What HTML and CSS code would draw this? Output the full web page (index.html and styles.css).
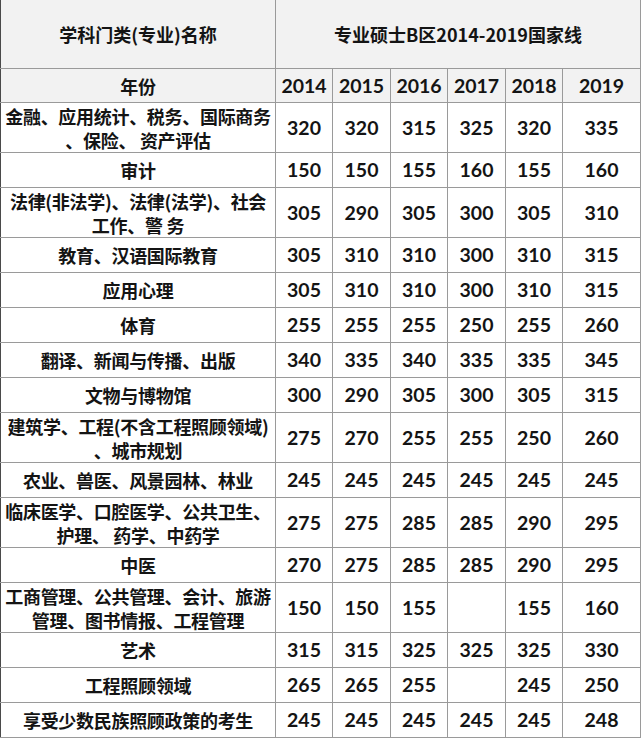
FILE: index.html
```html
<!DOCTYPE html>
<html lang="zh-CN">
<head>
<meta charset="utf-8">
<title>专业硕士B区2014-2019国家线</title>
<link rel="stylesheet" href="styles.css">
</head>
<body>
<table class="score-table">
  <colgroup>
    <col class="c-name">
    <col class="c-y1">
    <col class="c-y2">
    <col class="c-y3">
    <col class="c-y4">
    <col class="c-y5">
    <col class="c-y6">
  </colgroup>
  <thead>
    <tr class="r-title">
      <th class="name">学科门类(专业)名称</th>
      <th colspan="6" class="title">专业硕士B区2014-2019国家线</th>
    </tr>
    <tr class="r-years">
      <th class="name">年份</th>
      <th class="num">2014</th>
      <th class="num">2015</th>
      <th class="num">2016</th>
      <th class="num">2017</th>
      <th class="num">2018</th>
      <th class="num">2019</th>
    </tr>
  </thead>
  <tbody>
    <tr class="r2">
      <td class="name">金融、应用统计、税务、国际商务<br>、保险、 资产评估</td>
      <td class="num">320</td><td class="num">320</td><td class="num">315</td><td class="num">325</td><td class="num">320</td><td class="num">335</td>
    </tr>
    <tr class="r1">
      <td class="name">审计</td>
      <td class="num">150</td><td class="num">150</td><td class="num">155</td><td class="num">160</td><td class="num">155</td><td class="num">160</td>
    </tr>
    <tr class="r2">
      <td class="name">法律(非法学)、法律(法学)、社会<br>工作、警 务</td>
      <td class="num">305</td><td class="num">290</td><td class="num">305</td><td class="num">300</td><td class="num">305</td><td class="num">310</td>
    </tr>
    <tr class="r1">
      <td class="name">教育、汉语国际教育</td>
      <td class="num">305</td><td class="num">310</td><td class="num">310</td><td class="num">300</td><td class="num">310</td><td class="num">315</td>
    </tr>
    <tr class="r1">
      <td class="name">应用心理</td>
      <td class="num">305</td><td class="num">310</td><td class="num">310</td><td class="num">300</td><td class="num">310</td><td class="num">315</td>
    </tr>
    <tr class="r1">
      <td class="name">体育</td>
      <td class="num">255</td><td class="num">255</td><td class="num">255</td><td class="num">250</td><td class="num">255</td><td class="num">260</td>
    </tr>
    <tr class="r1">
      <td class="name">翻译、新闻与传播、出版</td>
      <td class="num">340</td><td class="num">335</td><td class="num">340</td><td class="num">335</td><td class="num">335</td><td class="num">345</td>
    </tr>
    <tr class="r1">
      <td class="name">文物与博物馆</td>
      <td class="num">300</td><td class="num">290</td><td class="num">305</td><td class="num">300</td><td class="num">305</td><td class="num">315</td>
    </tr>
    <tr class="r2">
      <td class="name">建筑学、工程(不含工程照顾领域)<br>、城市规划</td>
      <td class="num">275</td><td class="num">270</td><td class="num">255</td><td class="num">255</td><td class="num">250</td><td class="num">260</td>
    </tr>
    <tr class="r1">
      <td class="name">农业、兽医、风景园林、林业</td>
      <td class="num">245</td><td class="num">245</td><td class="num">245</td><td class="num">245</td><td class="num">245</td><td class="num">245</td>
    </tr>
    <tr class="r2">
      <td class="name">临床医学、口腔医学、公共卫生、<br>护理、 药学、中药学</td>
      <td class="num">275</td><td class="num">275</td><td class="num">285</td><td class="num">285</td><td class="num">290</td><td class="num">295</td>
    </tr>
    <tr class="r1">
      <td class="name">中医</td>
      <td class="num">270</td><td class="num">275</td><td class="num">285</td><td class="num">285</td><td class="num">290</td><td class="num">295</td>
    </tr>
    <tr class="r2">
      <td class="name">工商管理、公共管理、会计、旅游<br>管理、图书情报、工程管理</td>
      <td class="num">150</td><td class="num">150</td><td class="num">155</td><td class="num"></td><td class="num">155</td><td class="num">160</td>
    </tr>
    <tr class="r1">
      <td class="name">艺术</td>
      <td class="num">315</td><td class="num">315</td><td class="num">325</td><td class="num">325</td><td class="num">325</td><td class="num">330</td>
    </tr>
    <tr class="r1">
      <td class="name">工程照顾领域</td>
      <td class="num">265</td><td class="num">265</td><td class="num">255</td><td class="num"></td><td class="num">245</td><td class="num">250</td>
    </tr>
    <tr class="r1">
      <td class="name">享受少数民族照顾政策的考生</td>
      <td class="num">245</td><td class="num">245</td><td class="num">245</td><td class="num">245</td><td class="num">245</td><td class="num">248</td>
    </tr>
  </tbody>
</table>
</body>
</html>
```

FILE: styles.css
```css
html, body {
  margin: 0;
  padding: 0;
  background: #ffffff;
}

.score-table {
  border-collapse: collapse;
  table-layout: fixed;
  width: 641px;
  color: #141414;
  font-family: "Noto Sans CJK SC", "Noto Sans", sans-serif;
  font-weight: 700;
}

.c-name { width: 275px; }
.c-y1 { width: 57px; }
.c-y2 { width: 58px; }
.c-y3 { width: 57px; }
.c-y4 { width: 58px; }
.c-y5 { width: 57px; }
.c-y6 { width: 78px; }

.score-table th,
.score-table td {
  border: 1px solid #9a9a9a;
  padding: 0;
  text-align: center;
  vertical-align: middle;
  overflow: hidden;
}

.score-table thead th {
  background: #f2f2f2;
}

.score-table tr > :first-child {
  border-left-color: #4a4a4a;
}

.r-title th {
  border-top: none;
  height: 68px;
  font-size: 18px;
}

.r-years th { height: 33px; }
.r1 td { height: 34px; }
.r2 td { height: 49px; }

.name {
  font-size: 18px;
  letter-spacing: -0.3px;
  line-height: 24px;
  white-space: nowrap;
}

.r-title .name {
  font-size: 18px;
  letter-spacing: 0;
}

.r2 .name {
  height: 48px;
  padding-top: 1px;
  line-height: 24px;
}

.title {
  font-size: 18.3px;
}

.num {
  font-family: Lato, "Open Sans", sans-serif;
  font-size: 19.5px;
  line-height: 24px;
}
```
